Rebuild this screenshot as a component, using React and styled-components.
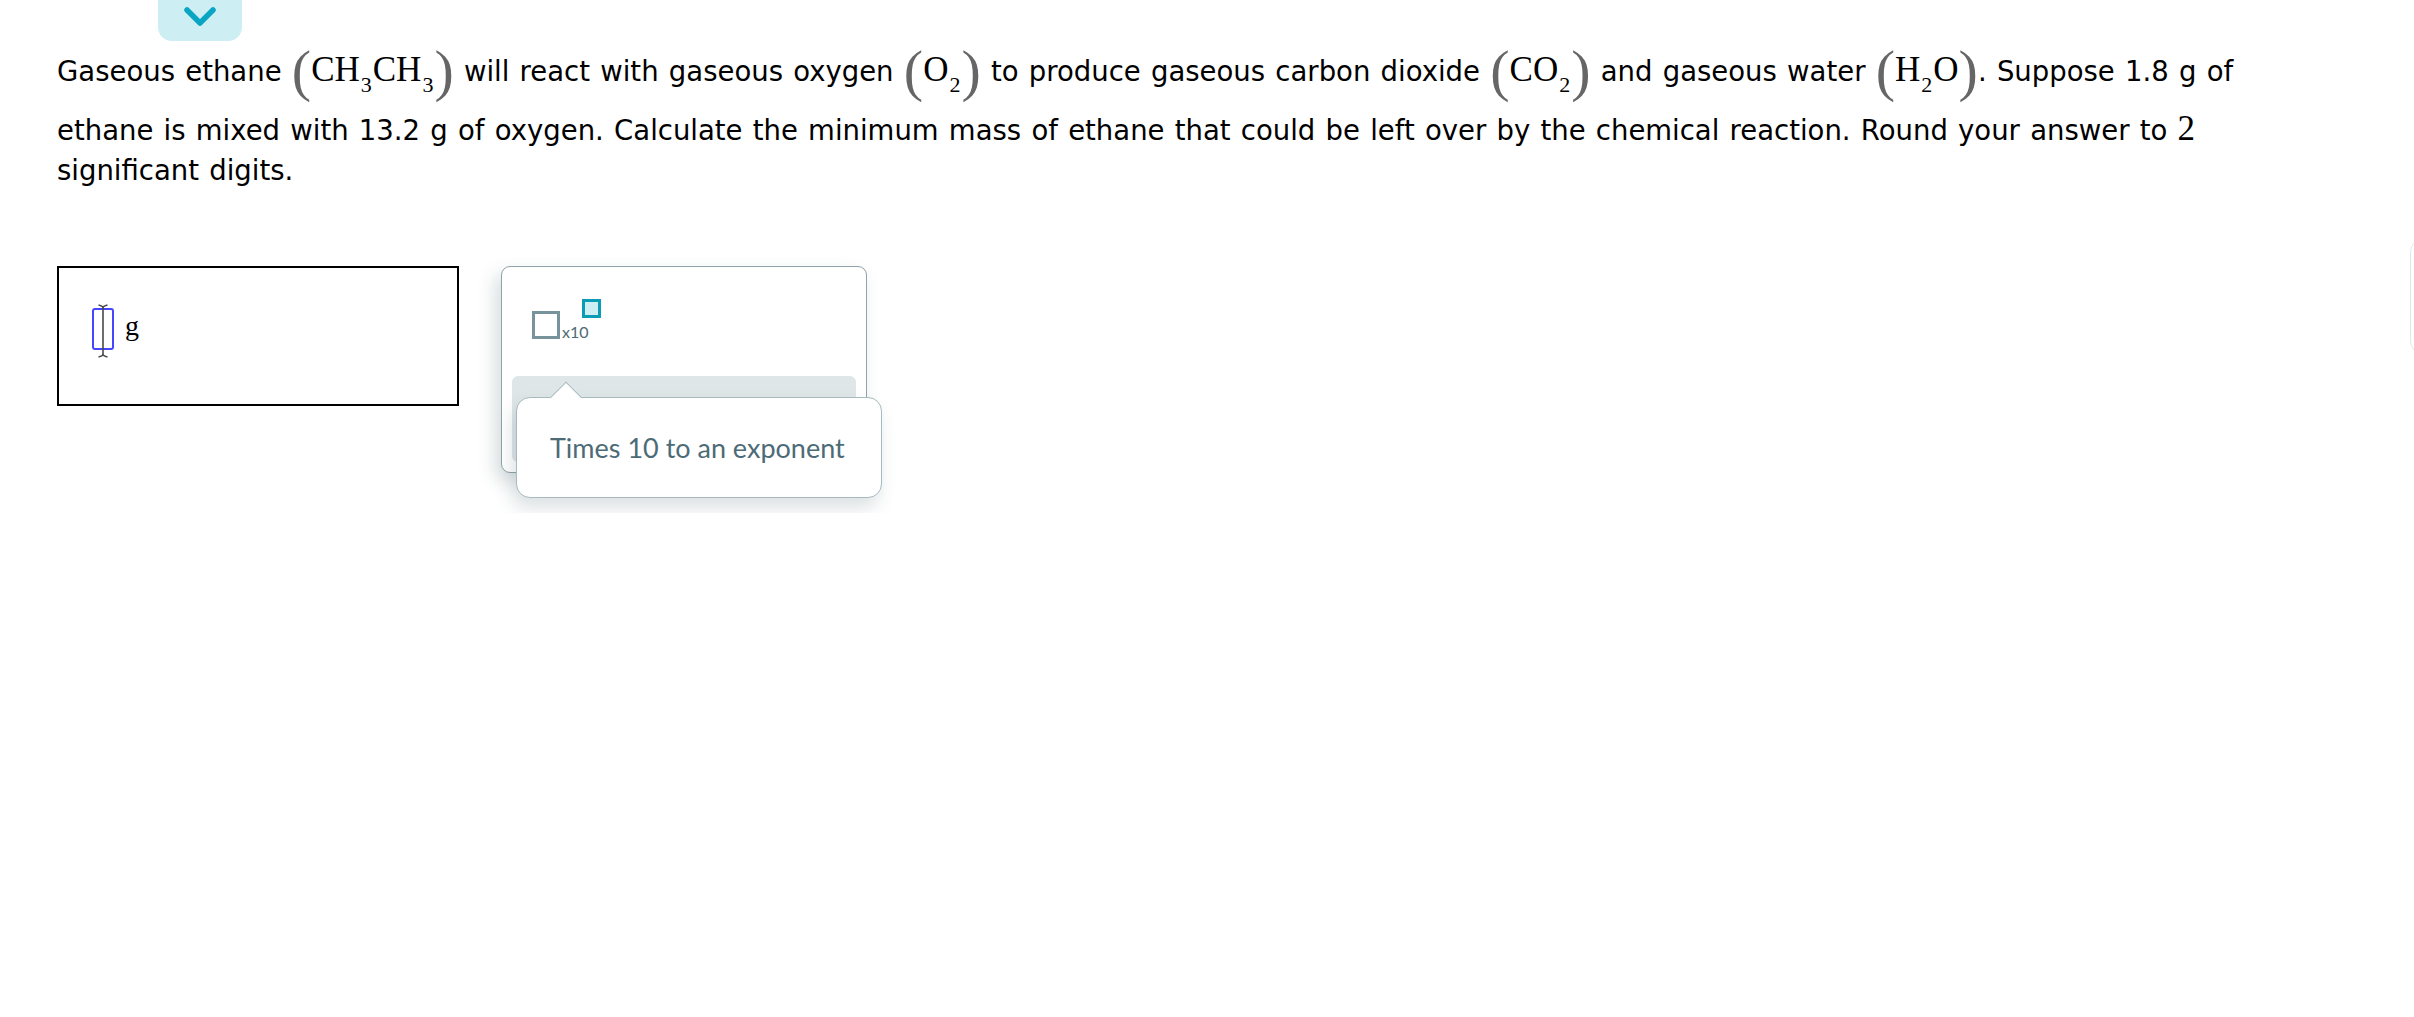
import React from "react";
import styled, { createGlobalStyle } from "styled-components";

const GlobalStyle = createGlobalStyle`
  html, body {
    margin: 0;
    background: #fff;
  }
  body {
    font-family: "DejaVu Sans", Verdana, sans-serif;
    color: #000;
  }
`;

const Page = styled.div`
  padding: 0 0 40px 57px;
`;

const Tab = styled.div`
  margin-left: 101px;
  width: 84px;
  height: 41px;
  background: #cdeef3;
  border-radius: 0 0 14px 14px;
  display: flex;
  justify-content: center;
  padding-top: 6px;
  box-sizing: border-box;
`;

const Question = styled.p`
  margin: 9px 0 0;
  width: 2225px;
  font-size: 27.5px;
  line-height: 40px;
  word-spacing: 1.5px;
`;

const Math = styled.span`
  font-family: "Liberation Serif", "Times New Roman", serif;
  font-size: 35px;
  white-space: nowrap;
  word-spacing: 0;
`;

const Paren = styled.span`
  font-size: 58px;
  color: #666;
  vertical-align: -9px;
`;

const Sub = styled.span`
  font-size: 22px;
  line-height: 50px;
  vertical-align: -11px;
  margin: 0 1px;
`;

const Num = styled.span`
  font-family: "Liberation Serif", "Times New Roman", serif;
  font-size: 35px;
  line-height: 30px;
`;

const AnswerRow = styled.div`
  display: flex;
  align-items: flex-start;
  gap: 42px;
  margin-top: 76px;
`;

const AnswerBox = styled.div`
  width: 402px;
  height: 140px;
  box-sizing: border-box;
  border: 2px solid #000;
  display: flex;
  align-items: flex-start;
  padding: 40px 0 0 33px;
`;

const Cursor = styled.span`
  position: relative;
  width: 22px;
  height: 42px;
  box-sizing: border-box;
  border: 2px solid #4646ff;
  border-radius: 3px;
  svg {
    position: absolute;
    left: 3px;
    top: -6px;
  }
`;

const Unit = styled.span`
  font-family: "Liberation Serif", "Times New Roman", serif;
  font-size: 28px;
  line-height: 28px;
  margin: 4px 0 0 11px;
`;

const Palette = styled.div`
  position: relative;
  width: 366px;
  height: 207px;
  box-sizing: border-box;
  border: 1.5px solid #8ea3aa;
  border-radius: 9px;
  padding: 10px;
  display: flex;
  flex-direction: column;
  background: #fff;
  box-shadow: -6px 8px 18px rgba(40, 70, 80, 0.18);
`;

const Sci = styled.div`
  display: flex;
  align-items: flex-start;
  margin: 22px 0 0 20px;
  font-family: Lato, "Open Sans", sans-serif;
`;

const Slot = styled.span`
  width: ${(p) => p.size}px;
  height: ${(p) => p.size}px;
  box-sizing: border-box;
  border: 3px solid ${(p) => (p.active ? "#0c9cb5" : "#77939b")};
  background: ${(p) => (p.active ? "#cdeef3" : "#fff")};
  margin-top: ${(p) => p.offset || 0}px;
  margin-left: ${(p) => p.shift || 0}px;
`;

const Times = styled.span`
  font-size: 16px;
  line-height: 16px;
  color: #4d6a73;
  margin: 25px 0 0 2px;
`;

const Tray = styled.div`
  margin-top: auto;
  height: 86px;
  background: #dfe6e8;
  border-radius: 6px;
`;

const Tooltip = styled.div`
  position: absolute;
  left: 14px;
  top: 130px;
  width: 366px;
  height: 101px;
  box-sizing: border-box;
  background: #fff;
  border: 1.5px solid #a6babf;
  border-radius: 14px;
  display: flex;
  align-items: center;
  padding-left: 33px;
  font-family: Lato, "Open Sans", sans-serif;
  font-size: 27px;
  color: #4d6b76;
  box-shadow: -4px 10px 18px rgba(40, 70, 80, 0.16);
  &::before {
    content: "";
    position: absolute;
    left: 38px;
    top: -12.5px;
    width: 21px;
    height: 21px;
    background: #fff;
    border-top: 1.5px solid #a6babf;
    border-left: 1.5px solid #a6babf;
    transform: rotate(45deg);
  }
`;

const EdgePeek = styled.div`
  position: fixed;
  right: -40px;
  top: 238px;
  width: 42px;
  height: 115px;
  border: 1px solid #e2e8ea;
  border-radius: 14px;
`;

const Chem = ({ children }) => (
  <Math>
    <Paren>(</Paren>
    {children}
    <Paren>)</Paren>
  </Math>
);

export default function App() {
  return (
    <>
      <GlobalStyle />
      <Page>
        <Tab>
          <svg width="34" height="22" viewBox="0 0 34 22">
            <polyline
              points="4,4 17,17 30,4"
              fill="none"
              stroke="#0aa5c3"
              strokeWidth="5.5"
              strokeLinecap="round"
              strokeLinejoin="round"
            />
          </svg>
        </Tab>
        <Question>
          Gaseous ethane{" "}
          <Chem>
            CH<Sub>3</Sub>CH<Sub>3</Sub>
          </Chem>{" "}
          will react with gaseous oxygen{" "}
          <Chem>
            O<Sub>2</Sub>
          </Chem>{" "}
          to produce gaseous carbon dioxide{" "}
          <Chem>
            CO<Sub>2</Sub>
          </Chem>{" "}
          and gaseous water{" "}
          <Chem>
            H<Sub>2</Sub>O
          </Chem>
          . Suppose 1.8 g of ethane is mixed with 13.2 g of oxygen. Calculate
          the minimum mass of ethane that could be left over by the chemical
          reaction. Round your answer to <Num>2</Num> significant digits.
        </Question>
        <AnswerRow>
          <AnswerBox>
            <Cursor>
              <svg width="12" height="54" viewBox="0 0 12 54">
                <path
                  d="M6 3 V51 M1.5 1 Q6 2 6 4 Q6 2 10.5 1 M1.5 53 Q6 52 6 50 Q6 52 10.5 53"
                  fill="none"
                  stroke="#4a4a4a"
                  strokeWidth="1.6"
                />
              </svg>
            </Cursor>
            <Unit>g</Unit>
          </AnswerBox>
          <Palette>
            <Sci>
              <Slot size={28} offset={12} />
              <Times>x10</Times>
              <Slot size={19} active shift={-7} />
            </Sci>
            <Tray />
            <Tooltip>Times 10 to an exponent</Tooltip>
          </Palette>
        </AnswerRow>
      </Page>
      <EdgePeek />
    </>
  );
}
